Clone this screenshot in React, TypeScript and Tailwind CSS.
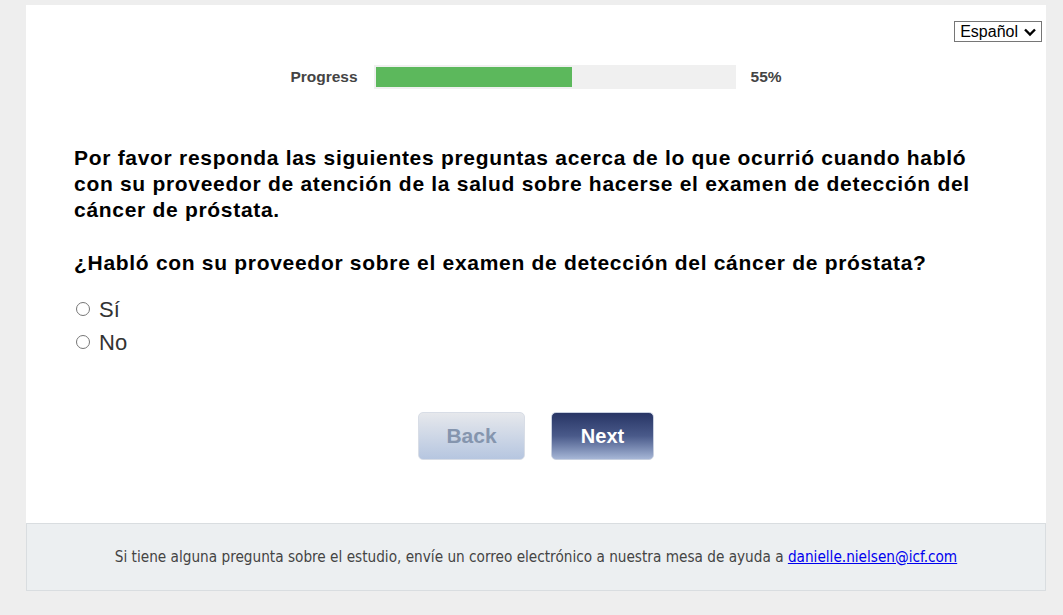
import React, { useState } from 'react';

const App = () => {
  const [answer, setAnswer] = useState<string | null>(null);
  const progress = 55;

  return (
    <div className="min-h-screen bg-[#eeeeee] pt-[5px] font-['Liberation_Sans',Arial,sans-serif]">
      <div className="ml-[26px] w-[1020px]">
        <div className="h-[518px] bg-white">
          <div className="flex justify-end pt-4 pr-1">
            <div className="relative flex h-[21px] items-center border border-[#767676] bg-white pl-[5px] pr-[4px] text-[16px] text-black">
              <span>Español</span>
              <svg viewBox="0 0 14 12" className="ml-[5px] h-[12px] w-[14px]">
                <path d="M2 3.5 L7 8.5 L12 3.5" fill="none" stroke="black" strokeWidth="2.4" />
              </svg>
            </div>
          </div>

          <div className="mt-[23px] flex items-center justify-center">
            <span className="text-[15.5px] font-bold text-[#444444]">Progress</span>
            <div className="ml-4 h-[24px] w-[362px] bg-[#f0f0f0] p-[2px]">
              <div className="h-full bg-[#5cb85c]" style={{ width: `${progress}%` }} />
            </div>
            <span className="ml-[15px] text-[15.5px] font-bold text-[#444444]">{progress}%</span>
          </div>

          <div className="pl-12 pr-[52px] pt-[56px]">
            <h1 className="text-[21px] font-bold leading-[26px] tracking-[0.7px] text-black">
              Por favor responda las siguientes preguntas acerca de lo que ocurrió cuando habló con su
              proveedor de atención de la salud sobre hacerse el examen de detección del cáncer de próstata.
            </h1>
            <h2 className="mt-[27px] text-[21px] font-bold leading-[26px] tracking-[0.7px] text-black">
              ¿Habló con su proveedor sobre el examen de detección del cáncer de próstata?
            </h2>

            <div className="mt-[20px] flex flex-col gap-[7px] text-[22px] text-[#333333]">
              {['Sí', 'No'].map((opt) => (
                <label key={opt} className="flex h-[26px] items-center">
                  <input
                    type="radio"
                    name="talked"
                    checked={answer === opt}
                    onChange={() => setAnswer(opt)}
                    className="ml-[2px] h-[14px] w-[14px] accent-[#333]"
                  />
                  <span className="ml-[9px]">{opt}</span>
                </label>
              ))}
            </div>
          </div>

          <div className="mt-[57px] flex justify-center gap-[26px]">
            <button className="h-[48px] w-[107px] rounded-[5px] border border-[#d8dde6] bg-gradient-to-b from-[#e6e8ec] to-[#b6c6e0] text-[21px] font-bold text-[#8595ae]">
              Back
            </button>
            <button className="h-[48px] w-[103px] rounded-[5px] border border-[#c8d0e0] bg-gradient-to-b from-[#283565] via-[#4a5a8a] to-[#a6b6d6] text-[20px] font-bold text-white">
              Next
            </button>
          </div>
        </div>

        <div className="flex h-[68px] items-center justify-center border border-[#d9dde0] bg-[#eceff1] text-[15.2px] text-[#444444] font-['Liberation_Sans_Narrow','DejaVu_Sans_Condensed',sans-serif]">
          <span>
            Si tiene alguna pregunta sobre el estudio, envíe un correo electrónico a nuestra mesa de ayuda a{' '}
            <a href="#" className="text-[#0000ee] underline">
              danielle.nielsen@icf.com
            </a>
          </span>
        </div>
      </div>
    </div>
  );
};

export default App;
